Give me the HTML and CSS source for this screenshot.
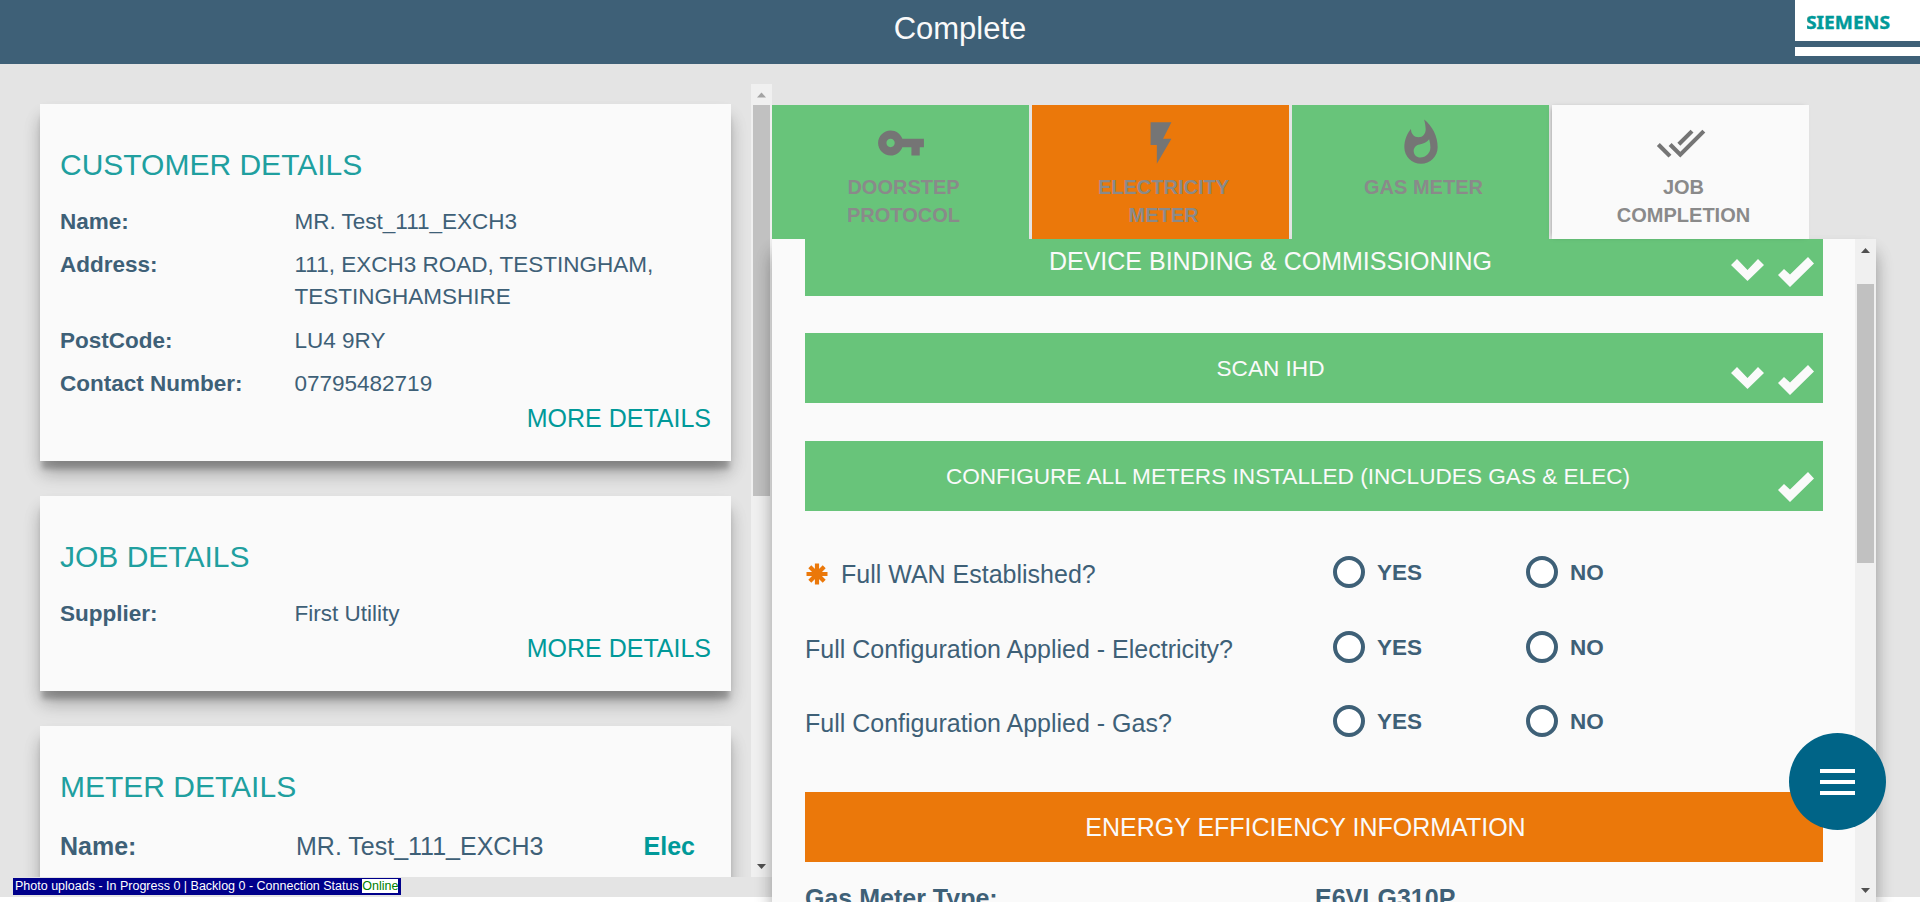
FILE: index.html
```
<!DOCTYPE html>
<html lang="en">
<head>
<meta charset="utf-8">
<title>Complete</title>
<link rel="stylesheet" href="styles.css">
</head>
<body>
<header class="topbar">
  <h1 class="topbar-title">Complete</h1>
  <div class="brand">
    <div class="brand-name"><svg width="90" height="24" viewBox="0 0 90 24"><text class="brand-text" x="-1" y="18.500" textLength="84" lengthAdjust="spacingAndGlyphs">SIEMENS</text></svg></div>
    <div class="brand-stripe"></div>
  </div>
</header>

<main class="workspace">
  <section class="sidebar">
    <div class="cards">
      <article class="card">
        <h2 class="card-title">CUSTOMER DETAILS</h2>
        <div class="row"><span class="label">Name:</span><span>MR. Test_111_EXCH3</span></div>
        <div class="row"><span class="label">Address:</span><span>111, EXCH3 ROAD, TESTINGHAM,<br>TESTINGHAMSHIRE</span></div>
        <div class="row"><span class="label">PostCode:</span><span>LU4 9RY</span></div>
        <div class="row"><span class="label">Contact Number:</span><span>07795482719</span></div>
        <a class="more">MORE DETAILS</a>
      </article>
      <article class="card">
        <h2 class="card-title">JOB DETAILS</h2>
        <div class="row"><span class="label">Supplier:</span><span>First Utility</span></div>
        <a class="more">MORE DETAILS</a>
      </article>
      <article class="card">
        <h2 class="card-title">METER DETAILS</h2>
        <div class="row row-meter"><span class="label">Name:</span><span>MR. Test_111_EXCH3</span><span class="fuel">Elec</span></div>
      </article>
    </div>
    <div class="scrollbar">
      <svg class="arrow arrow-off" width="21" height="21" viewBox="0 0 21 21"><path d="M6 13.500h9L10.500 8.500z"/></svg>
      <div class="thumb thumb-left"></div>
      <svg class="arrow arrow-end" width="21" height="21" viewBox="0 0 21 21"><path d="M6 8h9L10.500 13z"/></svg>
    </div>
  </section>

  <section class="job">
    <nav class="tabs">
      <div class="tab tab-done">
        <svg class="tab-icon" viewBox="0 0 24 24"><path d="M12.650 10C11.830 7.670 9.610 6 7 6c-3.310 0-6 2.690-6 6s2.690 6 6 6c2.610 0 4.830-1.670 5.650-4H17v4h4v-4h2v-4H12.650zM7 14c-1.100 0-2-.9-2-2s.9-2 2-2 2 .9 2 2-.9 2-2 2z"/></svg>
        <span class="tab-label">DOORSTEP<br>PROTOCOL</span>
      </div>
      <div class="tab tab-active">
        <svg class="tab-icon" viewBox="0 0 24 24"><path d="M7 2v11h3v9l7-12h-4l4-8z"/></svg>
        <span class="tab-label">ELECTRICITY<br>METER</span>
      </div>
      <div class="tab tab-done">
        <svg class="tab-icon" viewBox="0 0 24 24"><path d="M13.500.67s.74 2.650.74 4.800c0 2.060-1.350 3.730-3.410 3.730-2.070 0-3.630-1.670-3.630-3.730l.03-.36C5.210 7.510 4 10.620 4 14c0 4.420 3.580 8 8 8s8-3.580 8-8C20 8.610 17.410 3.800 13.500.67zM11.710 19c-1.780 0-3.220-1.400-3.220-3.140 0-1.620 1.050-2.760 2.810-3.120 1.770-.36 3.600-1.210 4.620-2.580.39 1.290.59 2.650.59 4.040 0 2.650-2.150 4.800-4.800 4.800z"/></svg>
        <span class="tab-label">GAS METER</span>
      </div>
      <div class="tab tab-plain">
        <svg class="tab-icon" viewBox="0 0 24 24"><path d="M18 7l-1.410-1.410-6.340 6.340 1.410 1.410L18 7zm4.240-1.410L11.660 16.170 7.480 12l-1.410 1.410L11.660 19l12-12-1.420-1.410zM.41 13.410L6 19l1.410-1.410L1.830 12 .41 13.410z"/></svg>
        <span class="tab-label">JOB<br>COMPLETION</span>
      </div>
    </nav>
    <div class="panel">
      <div class="panel-body">
        <div class="bar bar-first">DEVICE BINDING &amp; COMMISSIONING
          <span class="bar-icons"><svg class="chev" viewBox="0 0 33 22"><path d="M6 0L16.500 11 27 0 33 6 16.500 22 0 6z"/></svg><svg class="check" viewBox="0 0 36 30"><path d="M30 0L36 6.500 12 30 0 18 6 12 12 17.500z"/></svg></span>
        </div>
        <div class="bar bar-small">SCAN IHD
          <span class="bar-icons bar-icons-low"><svg class="chev" viewBox="0 0 33 22"><path d="M6 0L16.500 11 27 0 33 6 16.500 22 0 6z"/></svg><svg class="check" viewBox="0 0 36 30"><path d="M30 0L36 6.500 12 30 0 18 6 12 12 17.500z"/></svg></span>
        </div>
        <div class="bar bar-small bar-open">CONFIGURE ALL METERS INSTALLED (INCLUDES GAS &amp; ELEC)
          <span class="bar-icons"><svg class="check" viewBox="0 0 36 30"><path d="M30 0L36 6.500 12 30 0 18 6 12 12 17.500z"/></svg></span>
        </div>
        <div class="questions">
          <div class="question">
            <span class="question-text"><svg class="required" viewBox="-11 -11 22 22"><path d="M0-10.500V10.500M-10.500 0H10.500M-7.200-7.200L7.200 7.200M-7.200 7.200L7.200-7.200"/></svg>Full WAN Established?</span>
            <label class="option"><i class="radio"></i><span>YES</span></label><label class="option"><i class="radio"></i><span>NO</span></label>
          </div>
          <div class="question">
            <span class="question-text">Full Configuration Applied - Electricity?</span>
            <label class="option"><i class="radio"></i><span>YES</span></label><label class="option"><i class="radio"></i><span>NO</span></label>
          </div>
          <div class="question">
            <span class="question-text">Full Configuration Applied - Gas?</span>
            <label class="option"><i class="radio"></i><span>YES</span></label><label class="option"><i class="radio"></i><span>NO</span></label>
          </div>
        </div>
        <div class="bar bar-todo">ENERGY EFFICIENCY INFORMATION</div>
        <div class="meter-type"><span>Gas Meter Type:</span><span>E6VLG310P</span></div>
      </div>
      <div class="scrollbar">
        <svg class="arrow" width="21" height="25" viewBox="0 0 21 25"><path d="M6 14h9L10.500 9z"/></svg>
        <div class="thumb thumb-right"></div>
        <svg class="arrow arrow-end" width="21" height="25" viewBox="0 0 21 25"><path d="M6 11h9L10.500 16z"/></svg>
      </div>
    </div>
  </section>
</main>

<div class="upload-status">Photo uploads - In Progress 0 | Backlog 0 - Connection Status <span class="online">Online</span></div>
<div class="fab"><i></i><i></i><i></i></div>
</body>
</html>
```

FILE: styles.css
```
* { box-sizing: border-box; }
body {
  margin: 0;
  height: 902px;
  overflow: hidden;
  position: relative;
  background: #fff;
  color: #3e6077;
  font-family: "Liberation Sans", Arial, sans-serif;
}
.topbar {
  height: 64px;
  display: grid;
  grid-template-columns: 125px 1fr 125px;
  background: #3e6077;
}
.topbar-title {
  grid-column: 2;
  margin: 0;
  padding-top: 11px;
  text-align: center;
  font-size: 31px;
  line-height: 35px;
  font-weight: 400;
  color: #fafafa;
}
.brand { height: 56px; background: #fff; }
.brand-name { height: 41px; padding: 10px 0 0 12px; }
.brand-name svg { display: block; }
.brand-text {
  font: 700 18px "Noto Sans", "Open Sans", sans-serif;
  fill: #099;
  stroke: #099;
  stroke-width: .4px;
}
.brand-stripe { height: 6px; background: #3e6077; }

.workspace {
  height: 833px;
  display: flex;
  background: #e4e4e4;
}
.sidebar {
  width: 772px;
  height: 793px;
  margin-top: 20px;
  display: flex;
  overflow: hidden;
}
.cards {
  width: 751px;
  padding: 20px 20px 0 40px;
  display: flex;
  flex-direction: column;
  gap: 35px;
  overflow: hidden;
}
.card {
  flex: none;
  padding: 41px 20px 26.800px;
  background: #fafafa;
  box-shadow: 0 10px 5px -2px rgba(0,0,0,.2), 0 12px 16px -2px rgba(0,0,0,.22), 0 14px 20px -2px rgba(0,0,0,.12);
  font-size: 22.500px;
}
.card-title {
  margin: 0 0 21px;
  font-size: 30px;
  line-height: 40px;
  font-weight: 400;
  color: #209f9f;
}
.row {
  display: flex;
  line-height: 32px;
  margin-bottom: 11.300px;
}
.label { width: 234.500px; font-weight: 700; }
.row-meter { font-size: 25px; padding-top: 2px; }
.row-meter .label { width: 236px; }
.fuel { margin-left: auto; padding-right: 16px; font-weight: 700; color: #099; }
.more {
  display: block;
  margin-top: -9px;
  text-align: right;
  font-size: 25px;
  line-height: 32px;
  color: #099;
}
.scrollbar {
  width: 21px;
  flex: none;
  display: flex;
  flex-direction: column;
  align-items: center;
  background: #f0f0f0;
}
.arrow { display: block; fill: #505050; flex: none; }
.arrow-off { fill: #a3a3a3; }
.arrow-end { margin-top: auto; }
.thumb { width: 17px; background: #c1c1c1; }
.thumb-left { height: 391px; }
.thumb-right { height: 279px; margin-top: 20px; }

.job { width: 1104px; padding-top: 41px; }
.tabs { display: flex; gap: 3px; height: 134px; position: relative; z-index: 1; }
.tab {
  width: 257px;
  display: flex;
  flex-direction: column;
  align-items: center;
  padding-top: 13px;
}
.tab-done { background: #68c47a; }
.tab-active { background: #eb780a; }
.tab-plain {
  background: #fafafa;
  box-shadow: -2px 0 5px -3px rgba(0,0,0,.5);
}
.tab-icon { width: 50px; height: 50px; fill: #757575; }
.tab-label {
  padding: 5px 0 0 6px;
  text-align: center;
  font-weight: 700;
  font-size: 20px;
  line-height: 28px;
  color: #8a8a8a;
}
.panel {
  height: 663px;
  display: flex;
  position: relative;
  background: #fafafa;
  box-shadow: 0 12px 16px -2px rgba(0,0,0,.3), 0 14px 20px -2px rgba(0,0,0,.15);
}
.panel-body { width: 1083px; padding: 0 32px 0 33px; overflow: hidden; }
.bar {
  position: relative;
  height: 70px;
  margin-bottom: 38px;
  padding-right: 87px;
  background: #68c47a;
  color: #fafafa;
  font-size: 25px;
  line-height: 70px;
  text-align: center;
}
.bar-first { margin-top: -13px; margin-bottom: 37px; }
.bar-small { font-size: 22.600px; line-height: 71px; }
.bar-open { margin-bottom: 0; padding-right: 52px; }
.bar-todo { background: #eb780a; margin: 0; padding-right: 17px; }
.bar-icons {
  position: absolute;
  right: 9px;
  bottom: 9px;
  display: flex;
  gap: 14px;
  align-items: center;
}
.bar-icons-low { bottom: 8px; }
.chev { width: 33px; height: 22px; margin-bottom: 4px; fill: #fafafa; }
.check { width: 36px; height: 30px; fill: #fafafa; }
.questions { padding: 24px 0 33px; }
.question {
  display: grid;
  grid-template-columns: 528px 193px 1fr;
  height: 74.600px;
  align-items: center;
}
.question-text { display: flex; align-items: center; font-size: 25px; padding-top: 5px; }
.required {
  width: 22px;
  height: 22px;
  margin: 0 13px 2px 1px;
  stroke: #eb780a;
  stroke-width: 4.200;
  fill: none;
}
.option { display: flex; align-items: center; gap: 12px; font-size: 22.500px; font-weight: 700; }
.option span { padding-top: 2px; }
.radio { width: 32px; height: 32px; border: 4px solid #3e6077; border-radius: 50%; background: #fff; }
.meter-type {
  display: grid;
  grid-template-columns: 510px 1fr;
  padding-top: 22px;
  font-size: 25px;
  font-weight: 700;
}
.upload-status {
  position: absolute;
  left: 13px;
  top: 878px;
  height: 17px;
  padding: 1px 3px 1px 2px;
  background: #00008b;
  color: #fff;
  font-size: 12.500px;
  line-height: 14px;
  white-space: nowrap;
}
.online { display: inline-block; background: #fff; color: green; }
.fab {
  position: absolute;
  left: 1789px;
  top: 733px;
  width: 97px;
  height: 97px;
  border-radius: 50%;
  background: #006487;
  display: flex;
  flex-direction: column;
  align-items: center;
  justify-content: center;
  gap: 7px;
}
.fab i { width: 35px; height: 4px; background: #fff; }
```
